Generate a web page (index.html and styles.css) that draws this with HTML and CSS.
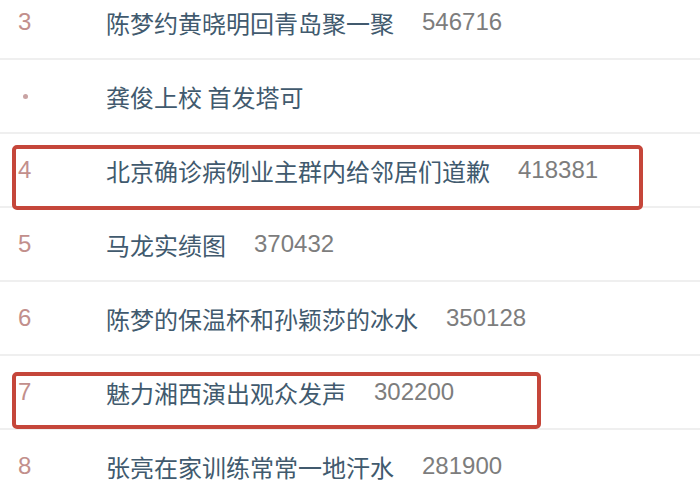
FILE: index.html
```html
<!DOCTYPE html>
<html lang="zh">
<head>
<meta charset="utf-8">
<link rel="stylesheet" href="styles.css">
</head>
<body>
<ul class="list">
  <li class="row"><span class="rank">3</span><span class="title">陈梦约黄晓明回青岛聚一聚</span><span class="num">546716</span></li>
  <li class="row"><span class="rank"><span class="dot"></span></span><span class="title">龚俊上校 首发塔可</span></li>
  <li class="row"><span class="rank">4</span><span class="title">北京确诊病例业主群内给邻居们道歉</span><span class="num">418381</span><span class="mark mark-a"></span></li>
  <li class="row"><span class="rank">5</span><span class="title">马龙实绩图</span><span class="num">370432</span></li>
  <li class="row"><span class="rank">6</span><span class="title">陈梦的保温杯和孙颖莎的冰水</span><span class="num">350128</span></li>
  <li class="row"><span class="rank">7</span><span class="title">魅力湘西演出观众发声</span><span class="num">302200</span><span class="mark mark-b"></span></li>
  <li class="row"><span class="rank">8</span><span class="title">张亮在家训练常常一地汗水</span><span class="num">281900</span></li>
</ul>
</body>
</html>
```

FILE: styles.css
```css
html, body {
  margin: 0;
  padding: 0;
  background: #ffffff;
  width: 700px;
  height: 500px;
  overflow: hidden;
}
.list {
  list-style: none;
  margin: -14px 0 0 0;
  padding: 0;
}
.row {
  position: relative;
  display: flex;
  align-items: center;
  height: 72px;
  border-bottom: 2px solid #efefef;
  font-size: 24px;
}
.rank {
  width: 88px;
  padding-left: 18px;
  font-family: "Liberation Sans", Arial, sans-serif;
  color: #c28f8c;
  display: flex;
  align-items: center;
}
.dot {
  display: inline-block;
  width: 5px;
  height: 5px;
  border-radius: 50%;
  background: #c9a3a3;
  margin-left: 5px;
}
.title {
  font-family: "Noto Sans CJK SC", sans-serif;
  color: #415a6e;
  letter-spacing: 0;
}
.num {
  font-family: "Liberation Sans", Arial, sans-serif;
  color: #7d7d7d;
  margin-left: 28px;
}
.mark {
  position: absolute;
  left: 12px;
  border: 4px solid #c5463a;
  border-radius: 5px;
  box-sizing: border-box;
}
.mark-a {
  top: 11px;
  width: 631px;
  height: 65px;
}
.mark-b {
  top: 16px;
  width: 529px;
  height: 57px;
}
```
